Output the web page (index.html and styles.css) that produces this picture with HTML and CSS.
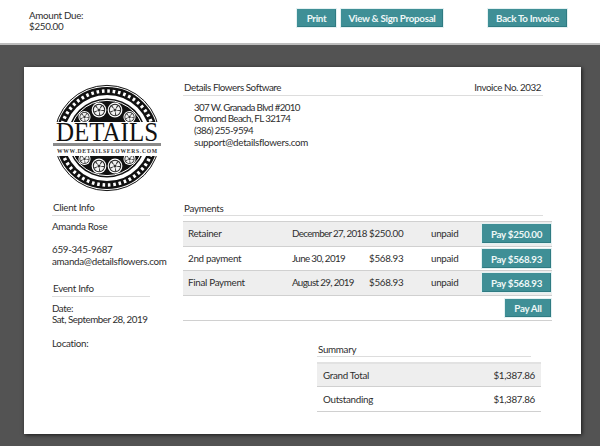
FILE: index.html
```html
<!DOCTYPE html>
<html lang="en">
<head>
<meta charset="utf-8">
<title>Invoice 2032</title>
<link rel="stylesheet" href="styles.css">
</head>
<body>
<header class="topbar">
  <div class="due">Amount Due:<br>$250.00</div>
  <div class="actions">
    <a class="btn print">Print</a>
    <a class="btn view">View &amp; Sign Proposal</a>
    <a class="btn back">Back To Invoice</a>
  </div>
</header>
<main class="stage">
  <section class="paper">
    <div class="left">
      <svg class="logo" width="110" height="110" viewBox="0 0 110 110" aria-label="Details logo">
        <defs>
          <clipPath id="band"><path d="M0 0H110V39H0ZM0 73H110V110H0Z"/></clipPath>
          <g id="rose">
            <circle r="7.4" fill="#fff"/>
            <circle r="6.2" fill="#222"/>
            <circle r="5.2" fill="#f2f2f2"/>
            <circle r="3.5" fill="none" stroke="#333" stroke-width="3.4" stroke-dasharray="0.9 3.5"/>
            <circle r="1.5" fill="#333"/>
          </g>
          <g id="rose-small">
            <use href="#rose" transform="scale(.82)"/>
          </g>
        </defs>
        <g clip-path="url(#band)">
          <circle cx="55" cy="55" r="52.6" fill="#fff" stroke="#111" stroke-width="1"/>
          <circle cx="55" cy="55" r="47" fill="none" stroke="#111" stroke-width="8"/>
          <circle cx="55" cy="55" r="47" fill="none" stroke="#fff" stroke-width="3.4" stroke-dasharray="2.6 2.8"/>
          <circle cx="55" cy="55" r="41.5" fill="#fff"/>
          <circle cx="55" cy="55" r="39.5" fill="#111"/>
          <circle cx="55" cy="55" r="37.6" fill="none" stroke="#fff" stroke-width="1"/>
          <use href="#rose" x="47" y="27"/><use href="#rose" x="63" y="27"/>
          <use href="#rose-small" x="32.5" y="34"/><use href="#rose-small" x="77.5" y="34"/>
          <use href="#rose" x="47" y="83"/><use href="#rose" x="63" y="83"/>
          <use href="#rose-small" x="32.5" y="76"/><use href="#rose-small" x="77.5" y="76"/>
        </g>
        <text class="logo-word" x="55" y="53.7" text-anchor="middle" transform="scale(1 1.08)">DETAILS</text>
        <rect x="1" y="60" width="108" height="3" fill="#8a8a8a"/>
        <text class="logo-url" x="55" y="69.5" text-anchor="middle" textLength="100" lengthAdjust="spacing">WWW.DETAILSFLOWERS.COM</text>
      </svg>
      <h2 class="heading side">Client Info</h2>
      <p class="line name">Amanda Rose</p>
      <p class="line contact">659-345-9687<br>amanda@detailsflowers.com</p>
      <h2 class="heading side event">Event Info</h2>
      <p class="line event-date">Date:<br>Sat, September 28, 2019</p>
      <p class="line location">Location:</p>
    </div>
    <div class="right">
      <div class="company">
        <span>Details Flowers Software</span>
        <span>Invoice No. 2032</span>
      </div>
      <p class="address">307 W. Granada Blvd #2010<br>Ormond Beach, FL 32174<br>(386) 255-9594<br><span class="email">support@detailsflowers.com</span></p>
      <h2 class="heading payments">Payments</h2>
      <div class="pay-table">
        <div class="pay-row shade"><span>Retainer</span><span class="date">December 27, 2018</span><span>$250.00</span><span>unpaid</span><a class="btn pay">Pay $250.00</a></div>
        <div class="pay-row"><span>2nd payment</span><span class="date">June 30, 2019</span><span>$568.93</span><span>unpaid</span><a class="btn pay">Pay $568.93</a></div>
        <div class="pay-row shade"><span>Final Payment</span><span class="date">August 29, 2019</span><span>$568.93</span><span>unpaid</span><a class="btn pay">Pay $568.93</a></div>
        <div class="pay-all"><a class="btn all">Pay All</a></div>
      </div>
      <div class="summary">
        <h2 class="heading sum">Summary</h2>
        <div class="sum-table">
          <div class="sum-row shade"><span>Grand Total</span><span>$1,387.86</span></div>
          <div class="sum-row"><span>Outstanding</span><span>$1,387.86</span></div>
        </div>
      </div>
    </div>
  </section>
</main>
</body>
</html>
```
FILE: styles.css
```css
* { box-sizing: border-box; }
html, body { margin: 0; height: 100%; }
body {
  font-family: "Lato", "Noto Sans", sans-serif;
  font-size: 9.8px;
  letter-spacing: -0.3px;
  line-height: 11.7px;
  color: #2e2e2e;
  background: #535353;
  overflow: hidden;
}
.topbar {
  height: 45px;
  background: #fff;
  border-bottom: 2px solid #bdbdbd;
  display: flex;
  padding: 9px 33px 0 29px;
}
.due { width: 268px; padding-top: 1px; line-height: 11px; }
.actions { display: flex; flex: 1; gap: 5px; align-items: flex-start; }
.btn {
  display: block;
  background: #3f8f96;
  color: #eef7f7;
  height: 18px;
  line-height: 17px;
  font-weight: 700;
  text-align: center;
  border: 1px solid transparent;
  border-color: transparent #2f7b82 #2f7b82 transparent;
  box-shadow: 0 0 0 1px #e4f1f2;
  white-space: nowrap;
}
.print { width: 39px; }
.view { width: 102px; }
.back { width: 79px; margin-left: 40px; }
.stage { padding: 22px 19px 0 24px; }
.paper {
  width: 557px;
  height: 367px;
  background: #fff;
  box-shadow: 1px 1px 4px rgba(0, 0, 0, .7);
  display: flex;
  padding: 15px 29px 0 28px;
}
.left { width: 131px; flex: none; }
.logo { display: block; margin: 1px 0 0 0; letter-spacing: 0; }
.logo-word { font-family: "Liberation Serif", serif; font-size: 25px; fill: #111; }
.logo-url { font-family: "Liberation Serif", serif; font-size: 5.6px; font-weight: 700; fill: #333; }
.heading {
  margin: 0;
  font-size: inherit;
  font-weight: 400;
  line-height: inherit;
  padding: 0 0 1px 1px;
  border-bottom: 1px solid #ddd;
}
.side { width: 98px; margin-top: 9px; }
.event { margin-top: 15px; }
.line { margin: 6px 0 0; }
.name { margin-top: 5px; }
.contact { margin-top: 12px; }
.event-date { letter-spacing: -0.47px; }
.location { margin-top: 12px; }
.right { flex: 1; min-width: 0; }
.company {
  display: flex;
  justify-content: space-between;
  width: 360px;
  padding: 0 2px 1px 1px;
  border-bottom: 1px solid #ddd;
  letter-spacing: -0.43px;
}
.address { margin: 6px 0 0 11px; letter-spacing: -0.66px; }
.email { letter-spacing: -0.3px; }
.heading.payments { width: 360px; margin-top: 54px; }
.pay-table { margin-top: 5px; border-top: 1px solid #d0d0d0; }
.pay-row {
  display: grid;
  grid-template-columns: 104px 77px 62px 51px 69px;
  align-items: center;
  height: 24.5px;
  padding-left: 5px;
  border-bottom: 1px solid #d0d0d0;
}
.pay-row span { white-space: nowrap; }
.pay-row .date { letter-spacing: -0.65px; }
.shade { background: #eee; }
.btn.pay { height: 19px; line-height: 18px; }
.pay-all {
  display: flex;
  justify-content: flex-end;
  height: 25px;
  padding: 3px 1px 0 0;
  border-bottom: 1px solid #d0d0d0;
}
.btn.all { width: 46px; }
.summary { width: 224px; margin: 23px 0 0 134px; }
.heading.sum { width: 214px; }
.sum-table { margin-top: 5px; }
.sum-row {
  display: flex;
  justify-content: space-between;
  align-items: center;
  height: 25px;
  padding: 0 6px;
  border-bottom: 1px solid #d0d0d0;
}
.sum-row.shade { border-top: 2px solid #e2e2e2; }
```
